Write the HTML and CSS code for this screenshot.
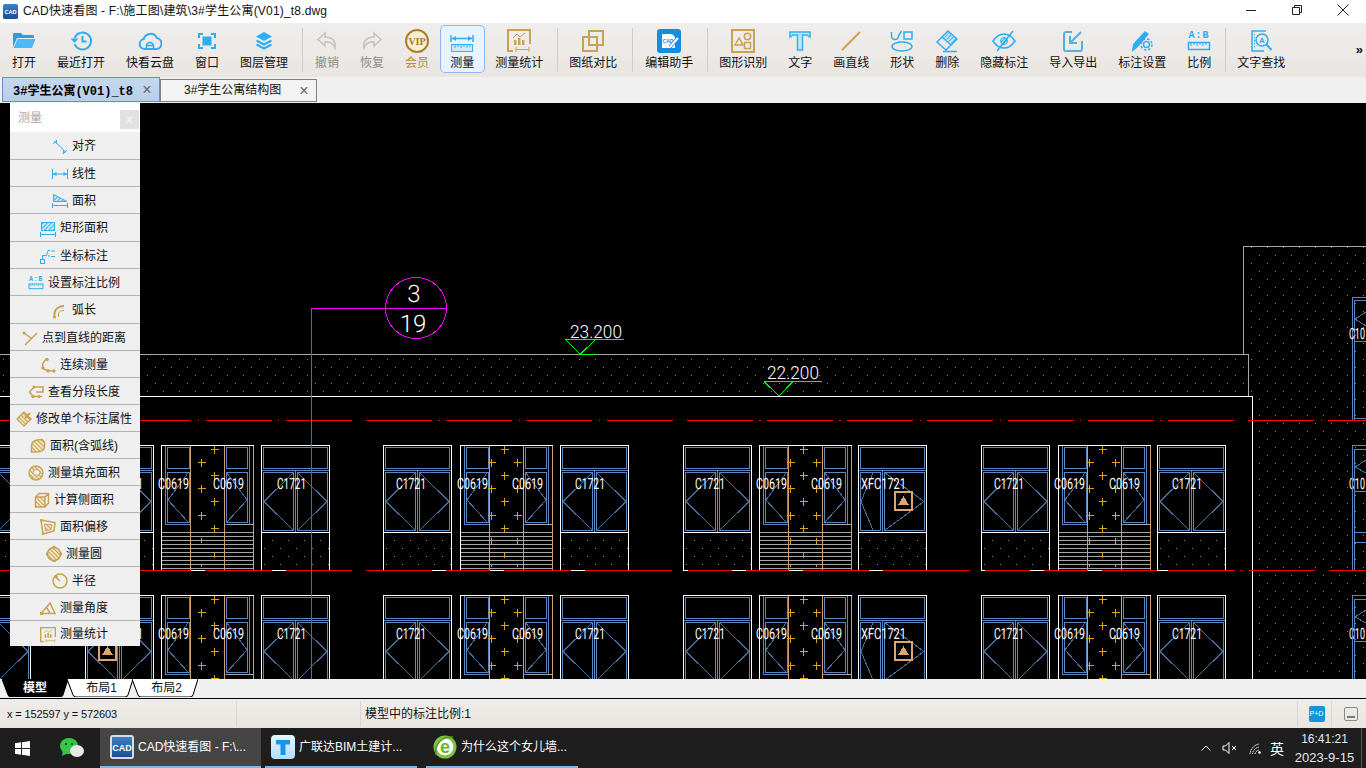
FILE: index.html
```html
<!DOCTYPE html>
<html lang="zh-CN">
<head>
<meta charset="utf-8">
<title>CAD快速看图</title>
<link rel="stylesheet" href="styles.css">
</head>
<body>
<svg class="defs" aria-hidden="true">
  <defs>
    <pattern id="hb" width="3" height="3" patternUnits="userSpaceOnUse" patternTransform="rotate(45)"><rect width="3" height="3" fill="#d8effc"/><rect width="1.2" height="3" fill="#35b0f2"/></pattern>
    <pattern id="hg" width="3" height="3" patternUnits="userSpaceOnUse" patternTransform="rotate(-45)"><rect width="3" height="3" fill="#f7f0dc"/><rect width="1.3" height="3" fill="#c9a24f"/></pattern>
    <pattern id="dots" width="16" height="16" patternUnits="userSpaceOnUse"><rect x="3" y="7" width="1" height="1" fill="#858585"/><rect x="11" y="15" width="1" height="1" fill="#858585"/></pattern>
    <linearGradient id="cadg" x1="0" y1="0" x2="0" y2="1"><stop offset="0" stop-color="#3f7fc4"/><stop offset="1" stop-color="#1c4f92"/></linearGradient>
    <linearGradient id="tg" x1="0" y1="0" x2="0" y2="1"><stop offset="0" stop-color="#e8f5ff"/><stop offset="1" stop-color="#b5dcf9"/></linearGradient>
    <symbol id="abr" viewBox="0 0 24 24"><text x="12" y="9" class="abtext">A:B</text><rect x="1.5" y="13.5" width="21" height="7" class="lb w15"/><path class="lb w1" d="M4 14v3M7 14v2M10 14v3M13 14v2M16 14v3M19 14v2"/></symbol>
    <symbol id="stat" viewBox="0 0 24 24"><path class="lg w2" d="M1 15V1H23V15M1 15V22H6"/><path class="fg" d="M7 11h2.4v5H7zM11 9h2.4v7H11zM15 11h2.4v5H15z"/><path class="lg w1" d="M6 9l4-4 3 3 5-4M9 20.5H22M9 18V23M22 18V23"/></symbol>

    <g id="win">
      <rect x=".5" y=".5" width="68" height="125" class="cw"/>
      <path class="cw" d="M.5 87.5H68.5"/>
      <rect x="2.5" y="2.5" width="64" height="21" class="cb"/>
      <path class="cb" d="M1 25.5H68M34.5 26V87"/>
      <rect x="2.5" y="27.5" width="30" height="58" class="cb"/>
      <rect x="36.5" y="27.5" width="30" height="58" class="cb"/>
      <path class="cd" d="M3 56.5L32 28M3 56.5L32 85M66 56.5L37 28M66 56.5L37 85"/>
      <rect x="1" y="88" width="67" height="37" fill="url(#dots)"/>
    </g>
    <g id="winx">
      <rect x=".5" y=".5" width="68" height="125" class="cw"/>
      <path class="cw" d="M.5 87.5H68.5"/>
      <rect x="2.5" y="2.5" width="64" height="21" class="cb"/>
      <path class="cb" d="M1 25.5H68M24.5 26V87"/>
      <rect x="2.5" y="27.5" width="20" height="58" class="cb"/>
      <rect x="26.5" y="27.5" width="40" height="58" class="cb"/>
      <path class="cd" d="M3 56.5L15 28M3 56.5L15 85M66 56.5L27 28M66 56.5L27 85"/>
      <rect x="1" y="88" width="67" height="37" fill="url(#dots)"/>
    </g>
    <g id="mid">
      <path class="cs" d="M1 87.5H92M1 91.5H92M1 95.5H92M1 99.5H92M1 103.5H92M1 107.5H92M1 111.5H92M1 115.5H92M1 119.5H92M1 123.5H92"/>
      <path class="cw" d="M.5 125V.5H92.5"/>
      <path class="co" d="M29.5 1V125M63.5 1V125M92.5 1V125"/>
      <path class="cb" d="M4.5 1V79.5H29M63.5 79.5H88M88.5 79V1"/>
      <rect x="6.5" y="2.5" width="21.5" height="21" class="cb"/>
      <rect x="6.5" y="27.5" width="21.5" height="50" class="cb"/>
      <rect x="65.5" y="2.5" width="21" height="21" class="cb"/>
      <rect x="65.5" y="27.5" width="21" height="50" class="cb"/>
      <path class="cd" d="M7 55L27 28M7 55L27 77M86 55L66 28M86 55L66 77"/>
      <path class="cs" d="M67 79.5H92"/>
    </g>
    <path id="plus" class="cy" d="M-3.5 .5H4.5M.5 -3.5V4.5"/>
    <g id="plus2">
      <use href="#plus" x="53" y="4"/><use href="#plus" x="40" y="17"/><use href="#plus" x="53" y="30"/><use href="#plus" x="40" y="43"/><use href="#plus" x="53" y="56"/><use href="#plus" x="40" y="70"/><use href="#plus" x="53" y="83"/>
      <path class="cy" d="M40.5 93V98M53.5 107V113M40.5 120V122"/>
    </g>
    <g id="plus3">
      <use href="#plus" x="44" y="4"/><use href="#plus" x="31" y="17"/><use href="#plus" x="57" y="17"/><use href="#plus" x="44" y="30"/><use href="#plus" x="31" y="43"/><use href="#plus" x="57" y="43"/><use href="#plus" x="44" y="56"/><use href="#plus" x="31" y="70"/><use href="#plus" x="57" y="70"/><use href="#plus" x="44" y="83"/>
      <path class="cy" d="M31.5 93V99M57.5 93V99M44.5 107V113M31.5 120V122M57.5 120V122"/>
    </g>
    <g id="warn">
      <rect x="1" y="1" width="17" height="18" class="cwarn"/>
      <path class="fwarn" d="M9.5 5L15 14H4z"/>
    </g>
    <g id="row">
      <use href="#win" x="85" y="0"/><use href="#mid" x="161" y="0"/><use href="#plus2" x="161" y="0"/><use href="#win" x="261" y="0"/>
      <use href="#win" x="383" y="0"/><use href="#mid" x="460" y="0"/><use href="#plus3" x="460" y="0"/><use href="#win" x="560" y="0"/>
      <use href="#win" x="683" y="0"/><use href="#mid" x="759" y="0"/><use href="#plus3" x="759" y="0"/><use href="#winx" x="858" y="0"/>
      <use href="#win" x="981" y="0"/><use href="#mid" x="1058" y="0"/><use href="#plus3" x="1058" y="0"/><use href="#win" x="1157" y="0"/>
      <use href="#win" x="-38" y="0"/>
      <use href="#warn" x="894" y="46"/><use href="#warn" x="98" y="46"/>
      <text class="ctx" x="113" y="44" textLength="30" lengthAdjust="spacingAndGlyphs">C1721</text>
      <text class="ctx" x="158" y="44" textLength="31" lengthAdjust="spacingAndGlyphs">C0619</text>
      <text class="ctx" x="213" y="44" textLength="31" lengthAdjust="spacingAndGlyphs">C0619</text>
      <text class="ctx" x="277" y="44" textLength="29" lengthAdjust="spacingAndGlyphs">C1721</text>
      <text class="ctx" x="396" y="44" textLength="30" lengthAdjust="spacingAndGlyphs">C1721</text>
      <text class="ctx" x="457" y="44" textLength="31" lengthAdjust="spacingAndGlyphs">C0619</text>
      <text class="ctx" x="512" y="44" textLength="31" lengthAdjust="spacingAndGlyphs">C0619</text>
      <text class="ctx" x="575" y="44" textLength="30" lengthAdjust="spacingAndGlyphs">C1721</text>
      <text class="ctx" x="695" y="44" textLength="30" lengthAdjust="spacingAndGlyphs">C1721</text>
      <text class="ctx" x="756" y="44" textLength="31" lengthAdjust="spacingAndGlyphs">C0619</text>
      <text class="ctx" x="811" y="44" textLength="31" lengthAdjust="spacingAndGlyphs">C0619</text>
      <text class="ctx" x="861" y="44" textLength="45" lengthAdjust="spacingAndGlyphs">XFC1721</text>
      <text class="ctx" x="994" y="44" textLength="30" lengthAdjust="spacingAndGlyphs">C1721</text>
      <text class="ctx" x="1054" y="44" textLength="31" lengthAdjust="spacingAndGlyphs">C0619</text>
      <text class="ctx" x="1109" y="44" textLength="31" lengthAdjust="spacingAndGlyphs">C0619</text>
      <text class="ctx" x="1172" y="44" textLength="30" lengthAdjust="spacingAndGlyphs">C1721</text>
      <text class="ctx" x="1349" y="44" textLength="16" lengthAdjust="spacingAndGlyphs">C10</text>
      <path class="cb" d="M1352.5 126V0H1366M1354.5 126V4H1366M1355 46H1366M1355 87.5H1366M1355 97H1366"/>
      <path class="cd" d="M1355 22L1366 15M1355 22L1366 28"/>
    </g>
  </defs>
</svg>

<div class="app">
  <header class="titlebar">
    <svg class="ic-title" viewBox="0 0 16 16"><rect width="16" height="16" rx="2" fill="url(#cadg)"/><text x="8" y="11" class="cadlogo">CAD</text></svg>
    <span class="title-text">CAD快速看图 - F:\施工图\建筑\3#学生公寓(V01)_t8.dwg</span>
    <div class="winbtns">
      <span class="winbtn"><svg viewBox="0 0 12 12"><path d="M1 6.5H11"/></svg></span>
      <span class="winbtn"><svg viewBox="0 0 12 12"><path d="M1.5 3.5H8.5V10.5H1.5zM3.5 3.5V1.5H10.5V8.5H8.5"/></svg></span>
      <span class="winbtn"><svg viewBox="0 0 12 12"><path d="M.5 .5L11.5 11.5M11.5 .5L.5 11.5"/></svg></span>
    </div>
  </header>

  <nav class="toolbar">
    <div class="tool"><svg class="ic" viewBox="0 0 24 24"><path fill="#2a9de4" d="M1 5a1 1 0 0 1 1-1h7l2 2h10a1 1 0 0 1 1 1v2H5L1 18z"/><path fill="#4cb9f8" d="M5.5 10H23.5L20 19H1.5z"/></svg><span>打开</span></div>
    <div class="tool"><svg class="ic" viewBox="0 0 24 24"><path class="lb w2" d="M5.6 9A8.5 8.5 0 1 1 5.6 15"/><path class="fb" d="M1.5 9.5L5.5 14L9.5 9.5z"/><path class="lb w2" d="M13.5 7v5.5h4"/></svg><span>最近打开</span></div>
    <div class="tool"><svg class="ic" viewBox="0 0 24 24"><path class="lb w2" d="M6.5 20a5 5 0 0 1-.8-9.9 7 7 0 0 1 13.2-1A5.5 5.5 0 0 1 18.5 20z"/><path class="lb w15" d="M8.5 20v-3a3.5 3.5 0 0 1 7 0v3M8.5 16.5h7"/></svg><span>快看云盘</span></div>
    <div class="tool"><svg class="ic" viewBox="0 0 24 24"><path class="lb w2" d="M4 9V5h4M16 5h4v4M20 15v4h-4M8 19H4v-4"/><rect x="7.5" y="7.5" width="9" height="9" class="fb"/></svg><span>窗口</span></div>
    <div class="tool"><svg class="ic" viewBox="0 0 24 24"><path class="fb" d="M12 3L20 7.5L12 12L4 7.5z"/><path class="lb w2" d="M4.5 11.5L12 15.5L19.5 11.5M4.5 15.5L12 19.5L19.5 15.5"/></svg><span>图层管理</span></div>
    <i class="sep sep-m"></i>
    <div class="tool off"><svg class="ic" viewBox="0 0 24 24"><path class="lgray" d="M10 4L3 10.5L10 17V13C15 12.5 18.5 15 20 19C21.5 12 17 8 10 8z"/></svg><span>撤销</span></div>
    <div class="tool off"><svg class="ic" viewBox="0 0 24 24"><path class="lgray" d="M14 4L21 10.5L14 17V13C9 12.5 5.5 15 4 19C2.5 12 7 8 14 8z"/></svg><span>恢复</span></div>
    <div class="tool vip"><svg class="ic" viewBox="0 0 24 24"><circle cx="12" cy="12" r="11" fill="#f8efd2" stroke="#ad7f28" stroke-width="2"/><text x="12" y="15.5" class="viptext">VIP</text></svg><span>会员</span></div>
    <div class="tool on"><svg class="ic" viewBox="0 0 24 24"><path class="lb w15" d="M1 6V13M23 6V13M2 9.5H22"/><path class="fb" d="M2 9.5L6 7V12zM22 9.5L18 7V12z"/><rect x="1.5" y="15.5" width="21" height="7" fill="#cfeafb" stroke="#35b0f2"/><path class="lb w1" d="M5 16v3M8 16v2M11 16v3M14 16v2M17 16v3M20 16v2"/></svg><span>测量</span></div>
    <div class="tool"><svg class="ic" viewBox="0 0 24 24"><use href="#stat"/></svg><span>测量统计</span></div>
    <i class="sep"></i>
    <div class="tool"><svg class="ic" viewBox="0 0 24 24"><rect x="8" y="2" width="14" height="14" class="lg w2"/><rect x="2" y="8" width="14" height="14" class="lg w2"/></svg><span>图纸对比</span></div>
    <i class="sep sep-l"></i>
    <div class="tool"><svg class="ic" viewBox="0 0 24 24"><rect width="24" height="24" rx="3" fill="#138ddd"/><path fill="#fff" d="M5 5h10l3 3v11H5z"/><text x="11" y="14" class="edtext">CAD</text><path d="M13 18L20 10" stroke="#138ddd" stroke-width="3.5"/><path d="M13 18L21 9" stroke="#fff" stroke-width="2"/></svg><span>编辑助手</span></div>
    <i class="sep"></i>
    <div class="tool"><svg class="ic" viewBox="0 0 24 24"><rect x="1" y="1" width="22" height="22" class="lg w2"/><path class="lg w15" d="M4 16L8 9L12 16z"/><circle cx="16.5" cy="7.5" r="3.2" class="lg w15"/><rect x="13.5" y="13.5" width="6" height="6" class="lg w15"/></svg><span>图形识别</span></div>
    <div class="tool"><svg class="ic" viewBox="0 0 24 24"><path fill="#bfe6fb" stroke="#35b0f2" stroke-width="1.5" d="M2 3h20v5l-3-2h-4.5v15h-5V6H5L2 8z"/></svg><span>文字</span></div>
    <div class="tool"><svg class="ic" viewBox="0 0 24 24"><path class="lg w2" d="M3 21L21 3"/></svg><span>画直线</span></div>
    <div class="tool"><svg class="ic" viewBox="0 0 24 24"><path class="lb w15" d="M1.5 3v4a3.5 3.5 0 0 0 7 0l3-5"/><rect x="14" y="3" width="8" height="7" class="lb w15"/><ellipse cx="12" cy="17.5" rx="10" ry="4.5" class="lb w15"/></svg><span>形状</span></div>
    <div class="tool"><svg class="ic" viewBox="0 0 24 24"><path fill="url(#hb)" d="M9 8L14 3L22 10L16 15z"/><path class="lb w15" d="M2 13L13 2L22 10L11 21zM7 8L16 16M8 22.5H22"/></svg><span>删除</span></div>
    <div class="tool"><svg class="ic" viewBox="0 0 24 24"><path class="lb w15" d="M1 12C5 6 9 5 12 5S19 6 23 12C19 18 15 19 12 19S5 18 1 12z"/><circle cx="12" cy="12" r="3.5" fill="url(#hb)" stroke="#2fadf3"/><path class="lb w15" d="M5 22L21 2"/></svg><span>隐藏标注</span></div>
    <div class="tool"><svg class="ic" viewBox="0 0 24 24"><path class="lbsoft" d="M11 3H5a2 2 0 0 0-2 2V20a2 2 0 0 0 2 2H19a2 2 0 0 0 2-2V12"/><path class="lbsoft" d="M20 3L10 13M9 7V14H16"/></svg><span>导入导出</span></div>
    <div class="tool"><svg class="ic" viewBox="0 0 24 24"><path class="fb" d="M2 23L3 15L15 2L19 5L8 18z"/><circle cx="16.5" cy="15.5" r="3" class="lb w15"/><circle cx="16.5" cy="15.5" r="5.5" class="lb w15" stroke-dasharray="2.5 1.8"/></svg><span>标注设置</span></div>
    <div class="tool"><svg class="ic" viewBox="0 0 24 24"><use href="#abr"/></svg><span>比例</span></div>
    <i class="sep"></i>
    <div class="tool"><svg class="ic" viewBox="0 0 24 24"><path class="lb w15" d="M17 2H3V22H15"/><path class="lb w1" d="M5.5 5V20" stroke-dasharray="1.5 1.5"/><circle cx="13" cy="11" r="6" class="lb w15"/><text x="13" y="14" class="stext">A</text><path class="lb w2" d="M17.5 15.5L22.5 21"/></svg><span>文字查找</span></div>
    <span class="more">»</span>
  </nav>

  <div class="doctabs">
    <div class="doctab active"><span>3#学生公寓(V01)_t8</span><b>×</b></div>
    <div class="doctab"><span>3#学生公寓结构图</span><b>×</b></div>
  </div>

  <main class="canvas">
    <svg class="drawing" viewBox="0 103 1366 576">
      <rect x="0" y="355" width="1249" height="41" fill="url(#dots)"/>
      <rect x="1244" y="247" width="9" height="149" fill="url(#dots)"/>
      <rect x="1253" y="247" width="113" height="432" fill="url(#dots)"/>
      <path class="cs" d="M1243.5 354V246.5H1366M0 354.5H1249M1248.5 354V396"/>
      <path class="cw" d="M0 396.5H1252.5V679"/>
      <use href="#row" y="445"/>
      <use href="#row" y="595"/>
      <path class="cb" d="M1352.5 420V297H1366M1354.5 420V300H1366M1355 341.5H1366M1355 418.5H1366"/>
      <path class="cd" d="M1355 319L1366 312M1355 319L1366 326"/>
      <text class="ctx" x="1349" y="339" textLength="16" lengthAdjust="spacingAndGlyphs">C10</text>
      <path class="cr" d="M-35.1 420.5H1366" stroke-dasharray="66 6.4 1.4 6.4"/>
      <path class="ck" d="M357 420.5H361M679 420.5H683M1240 420.5H1244"/>
      <path class="cr" d="M0 570.5H352M366 570.5H672M688 570.5H970M985 570.5H1235M1240 570.5H1242M1249 570.5H1315M1329 570.5H1366"/>
      <path class="cw" d="M191 570.5H205M272 570.5H286M432 570.5H446M490 570.5H504M571 570.5H585M732 570.5H746M789 570.5H803M869 570.5H883M1030 570.5H1044M1088 570.5H1102M1157 570.5H1168"/>
      <circle cx="416" cy="308" r="30.5" class="cm"/>
      <path class="cm" d="M311.5 679V308.5H447"/>
      <text class="ctx big" x="414" y="302" text-anchor="middle">3</text>
      <text class="ctx big" x="413" y="332" text-anchor="middle">19</text>
      <path class="cg" d="M565.5 339.5H623.5M565.5 339.5L580 354M595.5 339.5L580.5 354M580 354.5H596"/>
      <text class="ctx lvl" x="570" y="338" textLength="52" lengthAdjust="spacingAndGlyphs">23.200</text>
      <path class="cg" d="M764 381.5H822M764 381.5L779 396M793 381.5L779 396"/>
      <text class="ctx lvl" x="767" y="379" textLength="52" lengthAdjust="spacingAndGlyphs">22.200</text>
    </svg>

    <aside class="panel">
      <div class="panel-head"><span>测量</span><b>x</b></div>
      <div class="prow tall"><svg class="pi" viewBox="0 0 16 16"><path class="lb w1" d="M3.5 3L13 12.5M1 5L5 1M11 15L15 11"/><path class="fb" d="M2 2h3v3zM14 14h-3v-3z"/></svg><span>对齐</span></div>
      <div class="prow"><svg class="pi" viewBox="0 0 16 16"><path class="lb w1" d="M.5 3V13M15.5 3V13M1 8H15"/><path class="fb" d="M1 8L4.5 6V10zM15 8L11.5 6V10z"/></svg><span>线性</span></div>
      <div class="prow"><svg class="pi" viewBox="0 0 16 16"><path fill="url(#hb)" stroke="#35b0f2" d="M1.5 1.5L15 8.5H1.5z"/><path class="lb w1" d="M.5 10V15M15.5 10V15M1 12.5H15"/></svg><span>面积</span></div>
      <div class="prow tall"><svg class="pi" viewBox="0 0 16 16"><rect x="1.5" y="1.5" width="13" height="8" fill="url(#hb)" stroke="#35b0f2"/><path class="lb w1" d="M.5 11V16M15.5 11V16M1 13.5H15"/></svg><span>矩形面积</span></div>
      <div class="prow"><svg class="pi" viewBox="0 0 16 16"><rect x=".5" y="11.5" width="4" height="4" class="lb w1"/><path class="lb w1" d="M2.5 11V7.5H6.5L8 2.5H10M8 8H10M11 3H15M11 8.5H15"/></svg><span>坐标标注</span></div>
      <div class="prow"><svg class="pi" viewBox="0 0 24 24"><use href="#abr"/></svg><span>设置标注比例</span></div>
      <div class="prow tall"><svg class="pi" viewBox="0 0 16 16"><path class="lg w2" d="M2.5 14V10C3 6 7 3 12 3"/><path class="lg w1" d="M6.5 14V10C7 9 9 7.5 12 7.5"/><circle cx="2.5" cy="14" r="1.5" class="fg"/></svg><span>弧长</span></div>
      <div class="prow"><svg class="pi" viewBox="0 0 16 16"><path class="lg w15" d="M2 3L9 8M15 3L3 15"/><circle cx="2" cy="3" r="1.5" class="fg"/></svg><span>点到直线的距离</span></div>
      <div class="prow"><svg class="pi" viewBox="0 0 16 16"><path class="lg w15" d="M7 2C3 4 1 8 4 12C6 14 10 14 14 14"/><circle cx="7" cy="2.5" r="1.7" class="fg"/><circle cx="3" cy="11" r="1.7" class="fg"/><circle cx="8" cy="14" r="1.7" class="fg"/><circle cx="14" cy="14" r="1.7" class="fg"/></svg><span>连续测量</span></div>
      <div class="prow"><svg class="pi" viewBox="0 0 16 16"><path class="lg w15" d="M6 3L1.5 8L5 12.5H14M6 3H15V8H8"/><circle cx="5" cy="12.5" r="1.7" class="fg"/><circle cx="11" cy="12.5" r="1.5" class="fg"/><circle cx="6" cy="3" r="1.5" class="fg"/></svg><span>查看分段长度</span></div>
      <div class="prow"><svg class="pi" viewBox="0 0 16 16"><path fill="url(#hg)" stroke="#c9a24f" stroke-width="1.3" d="M1 8L8 1L15 8L8 15z"/><path class="lg w2" d="M9 7L14 2"/></svg><span>修改单个标注属性</span></div>
      <div class="prow"><svg class="pi" viewBox="0 0 16 16"><path fill="url(#hg)" stroke="#c9a24f" stroke-width="1.5" d="M1.5 14V7C2 3 6 1.5 12 1.5L14.5 4V10C14 13 9 14.5 1.5 14z"/></svg><span>面积(含弧线)</span></div>
      <div class="prow"><svg class="pi" viewBox="0 0 16 16"><circle cx="8" cy="8" r="7" fill="url(#hg)" stroke="#c9a24f" stroke-width="1.3"/><ellipse cx="8.5" cy="7.5" rx="3.5" ry="3" fill="#f0f0f0" stroke="#c9a24f"/></svg><span>测量填充面积</span></div>
      <div class="prow"><svg class="pi" viewBox="0 0 16 16"><path fill="url(#hg)" d="M1.5 5H11V15H1.5z"/><path class="lg w15" d="M1.5 5H11V15H1.5zM1.5 5L5 1.5H14.5V11L11 15M11 5L14.5 1.5"/></svg><span>计算侧面积</span></div>
      <div class="prow"><svg class="pi" viewBox="0 0 16 16"><path class="lg w15" d="M1 1L15 3.5L14 12L3 15z"/><path fill="url(#hg)" stroke="#c9a24f" d="M4.5 5L12 6L11 10.5L5.5 12z"/><circle cx="1.5" cy="1.5" r="1.3" class="fg"/><circle cx="3" cy="14.5" r="1.3" class="fg"/></svg><span>面积偏移</span></div>
      <div class="prow"><svg class="pi" viewBox="0 0 16 16"><circle cx="8" cy="8" r="6.5" fill="url(#hg)" stroke="#c9a24f" stroke-width="1.5"/><path class="fg" d="M6.5 0h3v2h-3zM6.5 14h3v2h-3zM0 6.5h2v3H0zM14 6.5h2v3h-2z"/></svg><span>测量圆</span></div>
      <div class="prow"><svg class="pi" viewBox="0 0 16 16"><circle cx="8" cy="8" r="7" class="lg w15"/><path class="lg w15" d="M8 8L3.5 4"/><path class="fg" d="M2.5 2.5L6.5 3.5L4 6z"/></svg><span>半径</span></div>
      <div class="prow"><svg class="pi" viewBox="0 0 16 16"><path class="lg w15" d="M1 13.5H15L10 3L1 13.5M6.5 7.5L10 13"/><rect x="0" y="12" width="3" height="3" class="fg"/></svg><span>测量角度</span></div>
      <div class="prow last"><svg class="pi" viewBox="0 0 24 24"><use href="#stat"/></svg><span>测量统计</span></div>
    </aside>
  </main>

  <div class="sheets">
    <div class="sheet cur"><svg viewBox="0 0 66 17" preserveAspectRatio="none"><path d="M0 0L6 15Q7 17 9 17H58Q60 17 61 15L66 0z"/></svg><span>模型</span></div>
    <div class="sheet"><svg viewBox="0 0 66 17" preserveAspectRatio="none"><path d="M0 0L6 15Q7 17 9 17H58Q60 17 61 15L66 0"/></svg><span>布局1</span></div>
    <div class="sheet"><svg viewBox="0 0 66 17" preserveAspectRatio="none"><path d="M0 0L6 15Q7 17 9 17H58Q60 17 61 15L66 0"/></svg><span>布局2</span></div>
  </div>

  <footer class="status">
    <div class="st st-xy">x = 152597 y = 572603</div>
    <div class="st st-scale">模型中的标注比例:1</div>
    <div class="st st-badge"><span class="pd">P+D</span></div>
    <div class="st st-min"><svg viewBox="0 0 14 14"><rect x=".5" y=".5" width="13" height="13" rx="1.5" fill="#e9e9e9" stroke="#8a8a8a"/><rect x="3" y="9" width="8" height="2" fill="#777"/></svg></div>
  </footer>

  <div class="taskbar">
    <div class="tb-start"><svg viewBox="0 0 16 16"><path fill="#fff" d="M0 2.3L6.5 1.4V7.5H0zM7.5 1.3L16 0V7.5H7.5zM0 8.5H6.5V14.6L0 13.7zM7.5 8.5H16V16L7.5 14.7z"/></svg></div>
    <div class="tb-pin"><svg viewBox="0 0 24 20"><ellipse cx="9" cy="8" rx="9" ry="8" fill="#35c748"/><path fill="#35c748" d="M3 12L2 18L8 15z"/><ellipse cx="17" cy="13" rx="7" ry="6" fill="#e8e8e8"/><circle cx="6" cy="6" r="1.2" fill="#12611f"/><circle cx="12" cy="6" r="1.2" fill="#12611f"/></svg></div>
    <div class="tb-item cur"><svg viewBox="0 0 24 24"><rect width="24" height="24" rx="3" fill="#d6dde6"/><rect x="2" y="2" width="20" height="20" fill="url(#cadg)"/><text x="12" y="15.5" class="cadlogo big">CAD</text></svg><span>CAD快速看图 - F:\...</span></div>
    <div class="tb-item a2"><svg viewBox="0 0 24 24"><rect width="24" height="24" rx="4" fill="url(#tg)"/><path fill="#1697ee" d="M5 5H19V9.5H14.5V20H9.5V9.5H5z"/></svg><span>广联达BIM土建计...</span></div>
    <div class="tb-item a3"><svg viewBox="0 0 24 24"><circle cx="12" cy="12" r="10" fill="#fff" stroke="#7cc23a" stroke-width="3"/><path d="M3 20C1 8 10 1 20 2" fill="none" stroke="#4d9a22" stroke-width="1.5"/><text x="12" y="17.5" class="ietext">e</text></svg><span>为什么这个女儿墙...</span></div>
    <div class="tray">
      <svg class="tr-up" viewBox="0 0 10 6"><path d="M.5 5.5L5 1L9.500 5.5"/></svg>
      <svg class="tr-sp" viewBox="0 0 15 14"><path d="M1 5H3.5L7 1.5V12.5L3.5 9H1zM10 5L14 9M14 5L10 9"/></svg>
      <svg class="tr-wf" viewBox="0 0 12 12"><path d="M1 12A11 11 0 0 1 10 2M3.5 12A8 8 0 0 1 10 5M6 12A5 5 0 0 1 10 8" stroke-dasharray="1.5 .6"/><circle cx="10.5" cy="10.5" r="1.3"/></svg>
      <span class="tr-ime">英</span>
      <div class="clock"><span class="t">16:41:21</span><span class="d">2023-9-15</span></div>
      <i class="tr-line"></i>
    </div>
  </div>
</div>
</body>
</html>
```
FILE: styles.css
```css
* { box-sizing: border-box; }
html, body { margin: 0; padding: 0; background: #000; }
body { font: 12px/1.2 "Liberation Sans", "Noto Sans CJK SC", sans-serif; color: #111; overflow: hidden; }
.defs { display: block; width: 0; height: 0; }
.app { width: 1366px; height: 768px; display: flex; flex-direction: column; }

/* icon paint */
.lb { fill: none; stroke: #2fadf3; }
.lg { fill: none; stroke: #c9a24f; }
.fb { fill: #2fadf3; }
.fg { fill: #c9a24f; }
.w1 { stroke-width: 1; }
.w15 { stroke-width: 1.5; }
.w2 { stroke-width: 2; }
.lgray { fill: none; stroke: #c4c4c4; stroke-width: 1.6; }
.lbsoft { fill: none; stroke: #57aee0; stroke-width: 2; }
.abtext { font: bold 10px "Liberation Mono", monospace; fill: #2fadf3; text-anchor: middle; letter-spacing: 1px; }
.viptext { font: bold 10px "Liberation Serif", serif; fill: #a87a22; text-anchor: middle; }
.edtext { font: bold 5px "Liberation Sans", sans-serif; fill: #138ddd; text-anchor: middle; }
.stext { font: bold 8px "Liberation Sans", sans-serif; fill: #2fadf3; text-anchor: middle; }
.cadlogo { font: bold 6px "Liberation Sans", sans-serif; fill: #fff; text-anchor: middle; }
.cadlogo.big { font-size: 9px; }
.ietext { font: bold 18px "Liberation Sans", sans-serif; fill: #6cb52d; text-anchor: middle; }

/* title bar */
.titlebar { height: 23px; flex: none; background: #fff; display: flex; align-items: center; padding-left: 3px; }
.ic-title { width: 15px; height: 15px; margin-right: 5px; }
.title-text { font-size: 12px; color: #111; white-space: nowrap; letter-spacing: .18px; }
.winbtns { margin-left: auto; display: flex; }
.winbtn { width: 46px; height: 23px; display: flex; align-items: center; justify-content: center; padding-bottom: 3px; }
.winbtn svg { width: 12px; height: 12px; fill: none; stroke: #222; stroke-width: 1; }

/* toolbar */
.toolbar { height: 54px; flex: none; display: flex; align-items: flex-start; padding: 2px 0 0 1.5px; background: linear-gradient(#efeeec, #e9e5e1); }
.tool { height: 48px; padding: 4px 10.5px 0; display: flex; flex-direction: column; align-items: center; flex: none; border-radius: 5px; }
.tool span { margin-top: 2px; line-height: 16px; font-size: 12px; white-space: nowrap; color: #111; }
.ic { width: 24px; height: 24px; display: block; flex: none; }
.tool.off span { color: #8c8c8c; }
.tool.vip span { color: #c08a2c; }
.tool.on { background: #e9f2fd; box-shadow: inset 0 0 0 1px #8fb8f2; }
.sep { width: 1px; height: 44px; margin: 3px 1px 0 3px; background: #d0cdc9; flex: none; }
.sep-m { margin-right: 2px; }
.sep-l { margin: 3px 2px 0 4px; }
.more { margin-left: auto; margin-right: 3px; margin-top: 17px; font: bold 13px/16px "Liberation Sans", sans-serif; color: #111; }

/* document tabs */
.doctabs { height: 26px; flex: none; background: #f0f0f0; display: flex; align-items: flex-end; padding-left: 2px; }
.doctab { width: 157px; height: 23px; margin-bottom: 1px; background: #f3f3f3; border: 1px solid #808080; display: flex; align-items: center; justify-content: space-between; padding: 0 6px 0 23px; }
.doctab.active { width: 158px; height: 25px; background: linear-gradient(#c4d7ef, #b9cfea); border-color: #6d8fbf; padding-left: 10px; }
.doctab span { white-space: nowrap; font-size: 12px; }
.doctab.active span { font: bold 12px "Liberation Mono", "Noto Sans CJK SC", monospace; color: #000; }
.doctab b { font: 400 16px/1 "Liberation Sans", sans-serif; color: #666; width: 12px; text-align: center; }

/* drawing */
.canvas { position: relative; height: 576px; flex: none; background: #000; overflow: hidden; }
.drawing { display: block; width: 1366px; height: 576px; shape-rendering: crispEdges; }
.cw, .cb, .cd, .cs, .co, .cy, .cr, .cm, .cg, .ck, .cwarn { fill: none; stroke-width: 1; }
.cw { stroke: #fff; }
.cb { stroke: #5b86bf; }
.cd { stroke: #46709f; }
.cs { stroke: #a6a6a6; }
.co { stroke: #cf9f6c; }
.cy { stroke: #e0a410; }
.cr { stroke: #ff0000; }
.ck { stroke: #000; }
.cm { stroke: #ff00ff; }
.cg { stroke: #00ff00; }
.cwarn { stroke: #dca66e; stroke-width: 2; }
.fwarn { fill: #dca66e; }
.ctx { font: 400 15.500px "Roboto", "Liberation Sans", sans-serif; fill: #fff; text-rendering: geometricPrecision; }
.ctx.big { font-size: 24px; font-weight: 300; }
.ctx.lvl { font-size: 18px; font-weight: 300; }

/* measure panel */
.panel { position: absolute; left: 10px; top: 0; width: 130px; height: 543px; background: #efefef; }
.panel-head { height: 29px; background: #fff; display: flex; justify-content: space-between; padding: 7px 1px 0 8px; }
.panel-head span { color: #b0a79c; font-size: 12px; line-height: 16px; }
.panel-head b { width: 19px; height: 19px; background: #e1e1e1; color: #f4f4f4; text-align: center; font: 700 11px/19px "Liberation Sans", sans-serif; }
.prow { height: 27px; display: flex; align-items: center; justify-content: center; gap: 4px; padding: 2px 2px 0 0; border-bottom: 1px solid #b4b4b4; }
.prow.tall { height: 28px; }
.prow.last { height: 25px; border-bottom: 0; }
.prow span { font-size: 12px; white-space: nowrap; color: #111; }
.pi { width: 16px; height: 16px; flex: none; }

/* layout tabs */
.sheets { height: 20px; flex: none; background: #f0f0f0; border-bottom: 1px solid #000; display: flex; padding-left: 2px; }
.sheet { position: relative; width: 66px; height: 18px; margin-right: -1px; display: flex; align-items: center; justify-content: center; padding-left: 3px; }
.sheet svg { position: absolute; left: 0; top: 0; width: 100%; height: 100%; fill: #fff; stroke: #000; stroke-width: 1; }
.sheet span { position: relative; font-size: 12px; color: #111; }
.sheet.cur { padding-left: 0; }
.sheet.cur svg { fill: #000; }
.sheet.cur span { color: #fff; font-weight: 700; }

/* status bar */
.status { height: 29px; flex: none; background: linear-gradient(#efede9, #e9e5e0); display: flex; align-items: stretch; padding: 2px 0 1px; }
.st { display: flex; align-items: center; border-right: 1px solid #d8d6d2; font-size: 12px; color: #111; }
.st-xy { width: 237px; padding-left: 7px; font: 11px "Liberation Sans", sans-serif; letter-spacing: -.12px; }
.st-scale { width: 938px; padding-left: 4px; margin-left: 123px; border-left: 1px solid #d8d6d2; }
.st-badge { width: 34px; justify-content: center; padding-left: 4px; }
.pd { width: 16px; height: 16px; background: #1296db; border-radius: 2px; color: #fff; font: 7px/16px "Liberation Sans", sans-serif; text-align: center; }
.st-min { border-right: 0; padding-left: 12px; }
.st-min svg { width: 14px; height: 14px; }

/* taskbar */
.taskbar { height: 40px; flex: none; background: #1e1e1e; display: flex; align-items: stretch; color: #fff; }
.tb-start { width: 44px; display: flex; align-items: center; justify-content: center; }
.tb-start svg { width: 15px; height: 15px; }
.tb-pin { width: 56px; display: flex; align-items: center; justify-content: center; }
.tb-pin svg { width: 24px; height: 20px; }
.tb-item { width: 152px; display: flex; align-items: center; gap: 4px; padding-left: 6px; border-bottom: 2px solid #76b9ed; white-space: nowrap; }
.tb-item svg { width: 24px; height: 24px; flex: none; }
.tb-item span { font-size: 12px; color: #fff; }
.tb-item.cur { width: 161px; padding-left: 10px; background: #454545; }
.tb-item.a2 { margin-left: 4px; }
.tb-item.a3 { margin-left: 9px; padding-left: 7px; }
.tray { margin-left: auto; display: flex; align-items: center; padding-right: 4px; }
.tray svg { fill: none; stroke: #fff; }
.tr-up { width: 10px; height: 6px; margin-right: 11px; }
.tr-sp { width: 15px; height: 14px; margin-right: 12px; }
.tr-wf { width: 12px; height: 12px; margin-right: 9px; }
.tr-wf circle { fill: #fff; stroke: none; }
.tr-ime { width: 14px; font: 14px/1 "Noto Sans CJK SC", sans-serif; margin-right: 7px; }
.clock { width: 67px; margin-right: 3px; display: flex; flex-direction: column; align-items: center; gap: 3px; color: #e8e8e8; }
.clock .t { font-size: 12px; line-height: 15px; }
.clock .d { font-size: 13px; line-height: 15px; }
.tr-line { width: 1px; height: 40px; background: #555; }
```
